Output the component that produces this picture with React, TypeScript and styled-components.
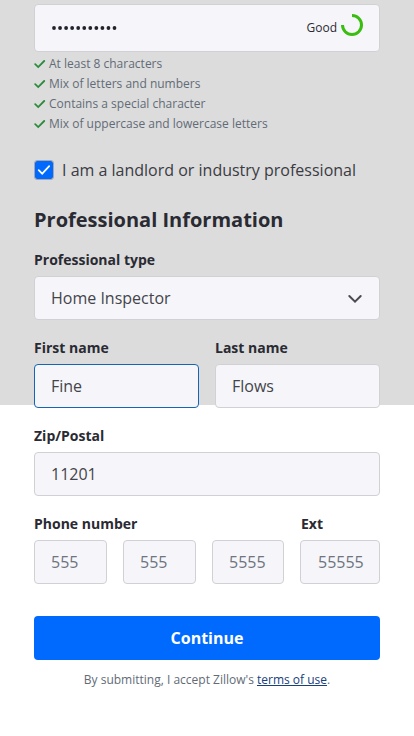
import React from "react";
import styled, { createGlobalStyle } from "styled-components";

const GlobalStyle = createGlobalStyle`
  *, *::before, *::after { box-sizing: border-box; }
  body {
    margin: 0;
    font-family: "Open Sans", "Noto Sans", sans-serif;
    color: #2a2a33;
    background: #fff;
  }
`;

const Page = styled.main`
  width: 414px;
  height: 736px;
  padding: 4px 34px 0;
  overflow: hidden;
  background: linear-gradient(#dcdcdc 405px, #fff 405px);
`;

const Form = styled.form`
  display: flex;
  flex-direction: column;
`;

const PasswordBox = styled.div`
  display: flex;
  align-items: center;
  height: 48px;
  padding: 0 16px;
  border: 1px solid #d1d1d5;
  border-radius: 4px;
  background: #f6f6fa;
`;

const Dots = styled.svg`
  display: block;
`;

const Strength = styled.span`
  display: flex;
  margin-left: auto;
  gap: 4px;
  font-size: 12px;
  line-height: 24px;
`;

const Ring = styled.svg`
  margin-top: -2px;
`;

const Hints = styled.ul`
  margin: 2px 0 0;
  padding: 0;
  list-style: none;
`;

const Hint = styled.li`
  display: flex;
  align-items: center;
  gap: 3px;
  height: 20px;
  font-size: 12px;
  line-height: 20px;
  color: #626b77;
`;

const CheckRow = styled.div`
  display: flex;
  align-items: center;
  gap: 8px;
  height: 24px;
  margin-top: 24px;
  font-size: 16px;
  color: #3b3b43;
`;

const CheckBox = styled.span`
  display: grid;
  place-items: center;
  width: 20px;
  height: 20px;
  border: 1px solid #a7a6ab;
  border-radius: 3px;
  background: #006aff;
  background-clip: padding-box;
`;

const Heading = styled.h2`
  margin: 24px 0 14px;
  font-size: 20px;
  font-weight: 700;
  line-height: 28px;
`;

const Row = styled.div<{ $columns?: string }>`
  display: grid;
  grid-template-columns: ${({ $columns }) => $columns ?? "1fr"};
  column-gap: 16px;
  align-items: end;
  margin-bottom: 16px;
`;

const Field = styled.div`
  min-width: 0;
`;

const Label = styled.div<{ $inset?: boolean }>`
  height: 28px;
  padding-left: ${({ $inset }) => ($inset ? "1px" : "0")};
  font-size: 14px;
  font-weight: 700;
  line-height: 24px;
  white-space: nowrap;
`;

const Control = styled.div<{ $focused?: boolean; $muted?: boolean; $inset?: boolean }>`
  display: flex;
  align-items: center;
  justify-content: space-between;
  height: 44px;
  padding: 0 16px 0 ${({ $inset }) => ($inset ? "17px" : "16px")};
  border: 1px solid ${({ $focused }) => ($focused ? "#1565b4" : "#d1d1d5")};
  border-radius: 4px;
  background: #f6f6fa;
  font-size: 16px;
  line-height: 24px;
  color: ${({ $muted }) => ($muted ? "#6e7480" : "#44444b")};
`;

const Chevron = styled.svg`
  margin-top: 2px;
`;

const Button = styled.button`
  height: 44px;
  margin-top: 16px;
  padding: 0;
  border: 0;
  border-radius: 4px;
  background: #006aff;
  color: #fff;
  font: 700 16px/24px "Open Sans", "Noto Sans", sans-serif;
`;

const Terms = styled.p`
  margin: 10px 0 0;
  text-align: center;
  font-size: 12px;
  line-height: 20px;
  color: #626b77;
`;

const TermsLink = styled.a`
  color: #17407c;
  text-decoration: underline;
`;

const hints = [
  "At least 8 characters",
  "Mix of letters and numbers",
  "Contains a special character",
  "Mix of uppercase and lowercase letters",
];

export default function App() {
  return (
    <>
      <GlobalStyle />
      <Page>
        <Form>
          <PasswordBox>
            <Dots width="68" height="6" fill="#22222b" aria-label="Password">
              {Array.from({ length: 11 }, (_, i) => (
                <circle key={i} cx={3 + i * 6.05} cy="3" r="1.9" />
              ))}
            </Dots>
            <Strength>
              Good
              <Ring width="22" height="22" viewBox="0 0 22 22" fill="none">
                <path d="M11 1.5A9.5 9.5 0 1 1 1.5 11" stroke="#39bd10" strokeWidth="3" />
              </Ring>
            </Strength>
          </PasswordBox>
          <Hints>
            {hints.map((hint) => (
              <Hint key={hint}>
                <svg width="12" height="10" viewBox="0 0 12 10" fill="none">
                  <path d="M1.2 5.2 4.2 8.1 10.2 2" stroke="#2c8c3c" strokeWidth="1.8" strokeLinecap="round" />
                </svg>
                {hint}
              </Hint>
            ))}
          </Hints>
          <CheckRow>
            <CheckBox>
              <svg width="14" height="12" viewBox="0 0 14 12" fill="none">
                <path d="M1.7 6.1 5.2 9.7 12.2 2.2" stroke="#fff" strokeWidth="1.7" strokeLinecap="round" />
              </svg>
            </CheckBox>
            I am a landlord or industry professional
          </CheckRow>
          <Heading>Professional Information</Heading>
          <Row>
            <Field>
              <Label>Professional type</Label>
              <Control>
                Home Inspector
                <Chevron width="16" height="10" viewBox="0 0 16 10" fill="none">
                  <path d="M2.3 2 8 7.7 13.7 2" stroke="#4a4a52" strokeWidth="2" strokeLinecap="round" />
                </Chevron>
              </Control>
            </Field>
          </Row>
          <Row $columns="1fr 1fr">
            <Field>
              <Label>First name</Label>
              <Control $focused>Fine</Control>
            </Field>
            <Field>
              <Label>Last name</Label>
              <Control>Flows</Control>
            </Field>
          </Row>
          <Row>
            <Field>
              <Label>Zip/Postal</Label>
              <Control>11201</Control>
            </Field>
          </Row>
          <Row $columns="73px 73px 72px 80px">
            <Field>
              <Label>Phone number</Label>
              <Control $muted>555</Control>
            </Field>
            <Control $muted>555</Control>
            <Control $muted>5555</Control>
            <Field>
              <Label $inset>Ext</Label>
              <Control $muted $inset>55555</Control>
            </Field>
          </Row>
          <Button type="button">Continue</Button>
          <Terms>
            By submitting, I accept Zillow's <TermsLink>terms of use</TermsLink>.
          </Terms>
        </Form>
      </Page>
    </>
  );
}
